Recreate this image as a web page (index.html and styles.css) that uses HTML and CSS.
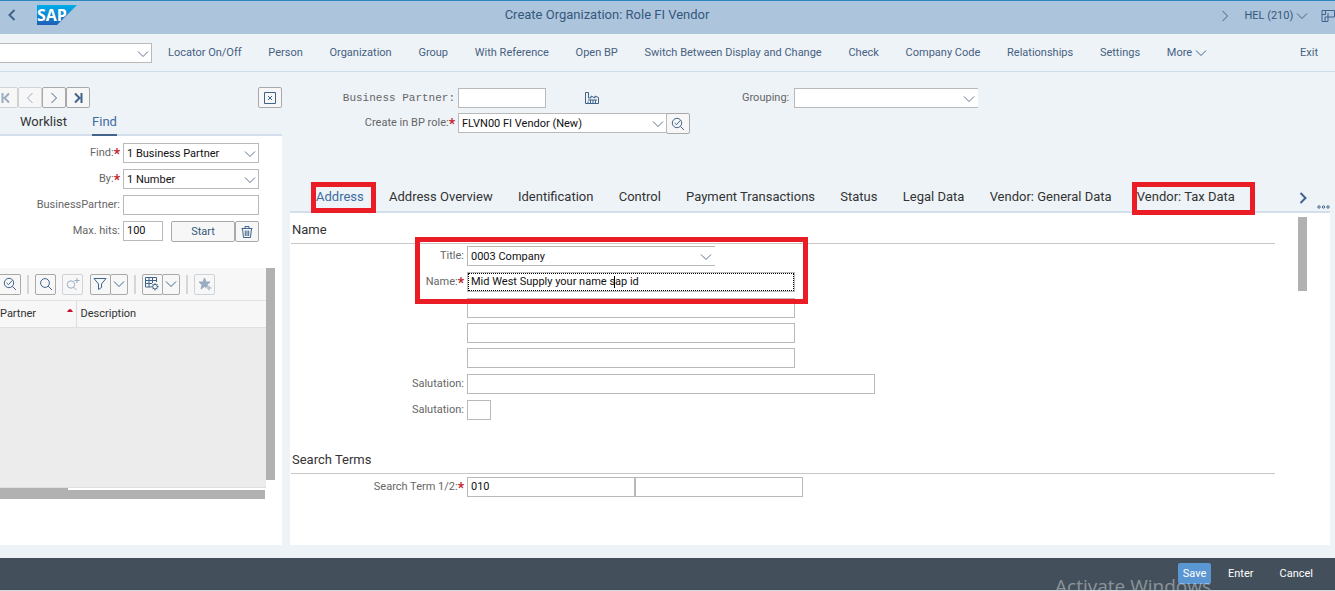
FILE: index.html
```html
<!DOCTYPE html>
<html lang="en">
<head>
<meta charset="utf-8">
<title>Create Organization: Role FI Vendor</title>
<link rel="stylesheet" href="styles.css">
</head>
<body>
<svg class="sprite" aria-hidden="true">
  <symbol id="down" viewBox="0 0 12 12"><path d="M1 3.5 6 8.5 11 3.5"/></symbol>
  <symbol id="right" viewBox="0 0 12 12"><path d="M3.5 1 8.5 6 3.5 11"/></symbol>
  <symbol id="left" viewBox="0 0 12 12"><path d="M8.5 1 3.5 6 8.5 11"/></symbol>
  <symbol id="first" viewBox="0 0 12 12"><path d="M2.5 1V11M9 1.500 4.500 6 9 10.500"/></symbol>
  <symbol id="last" viewBox="0 0 12 12"><path d="M9.500 1V11M3 1.500 7.500 6 3 10.500"/></symbol>
  <symbol id="search" viewBox="0 0 14 14"><circle cx="6" cy="6" r="4.400"/><path d="M9.200 9.200 13 13"/></symbol>
  <symbol id="search-check" viewBox="0 0 14 14"><circle cx="6" cy="6" r="4.700"/><path d="M9.400 9.400 13 13M3.700 6 5.500 7.700 9.300 3.400"/></symbol>
  <symbol id="search-plus" viewBox="0 0 14 14"><circle cx="5" cy="7.500" r="3.700"/><path d="M7.700 10.200 10.500 13M11 1V6M8.500 3.500H13.500"/></symbol>
  <symbol id="filter" viewBox="0 0 14 14"><path d="M1 1.500H13L8.500 7V10.500L5.500 12.500V7Z"/></symbol>
  <symbol id="table-gear" viewBox="0 0 14 14"><path d="M6.500 10H.5V.5H11.500V5M.5 3.500H11.500M.5 6.500H7M4 .5V10M7.500 .5V6"/><circle cx="10" cy="9.700" r="2.300"/><path d="M10 6V7.400M10 12V13.500M6.300 9.700H7.700M12.300 9.700H13.700M7.400 7.100 8.400 8.100M11.600 11.300 12.600 12.300M12.600 7.100 11.600 8.100M8.400 11.300 7.400 12.300"/></symbol>
  <symbol id="star-plus" viewBox="0 0 14 14"><path class="solid" d="M6.500 1 8 5H12L9 7.500 9.500 9.500H8V10.500L6.500 9.500 3 12 4 7.700 1 5H5Z"/><path d="M11 8.500V13.500M8.500 11H13.500"/></symbol>
  <symbol id="trash" viewBox="0 0 14 14"><path d="M1.500 3.500H12.500M5 3V1.500H9V3M2.500 3.500 3.500 12.500H10.500L11.500 3.500M5.300 5.500V11M7 5.500V11M8.700 5.500V11"/></symbol>
  <symbol id="close-box" viewBox="0 0 14 14"><path d="M1.500 1.500H12.500V12.500H1.500ZM5 5 9 9M9 5 5 9"/></symbol>
  <symbol id="factory" viewBox="0 0 14 12"><path d="M.5 .5V11.500H13.500V5.500L10 4V6L6 4V6H3.500V.5H.5M3 9.500V11.500M5.500 8V11M8 8V11M10.500 8V11M3 8H12"/></symbol>
  <symbol id="panel" viewBox="0 0 14 14"><path d="M1 1.500H13.500V8H7V12.500H1ZM4.500 1.500V5.500H1M7 4V8M4 12V8H7"/></symbol>
</svg>

<header class="shell">
  <div class="shell-left">
    <button aria-label="Back"><svg class="icon bold"><use href="#left"/></svg></button>
    <svg class="logo" viewBox="0 0 40 20" role="img" aria-label="SAP">
      <defs><linearGradient id="sap" x1="0" y1="0" x2="0" y2="1"><stop offset="0" stop-color="#00aeea"/><stop offset="1" stop-color="#1d5fb8"/></linearGradient></defs>
      <path fill="url(#sap)" d="M0 0H40L20 20H0Z"/>
      <text x="0" y="16">SAP</text>
    </svg>
  </div>
  <h1>Create Organization: Role FI Vendor</h1>
  <div class="shell-right">
    <button aria-label="Next"><svg class="icon"><use href="#right"/></svg></button>
    <button>HEL (210) <svg class="icon"><use href="#down"/></svg></button>
    <button aria-label="Panel"><svg class="icon large"><use href="#panel"/></svg></button>
  </div>
</header>

<nav class="menu">
  <span class="combo command"><select aria-label="Command"><option></option></select><svg class="icon"><use href="#down"/></svg></span>
  <div class="menu-items">
    <button>Locator On/Off</button><button>Person</button><button>Organization</button><button>Group</button><button>With Reference</button><button>Open BP</button><button>Switch Between Display and Change</button><button>Check</button><button>Company Code</button><button>Relationships</button><button>Settings</button><button>More <svg class="icon"><use href="#down"/></svg></button>
  </div>
  <button>Exit</button>
</nav>

<main class="work">
  <aside class="locator">
    <div class="locator-nav">
      <button class="btn cut nav dim" aria-label="First"><svg class="icon bold"><use href="#first"/></svg></button>
      <button class="btn nav dim" aria-label="Previous"><svg class="icon"><use href="#left"/></svg></button>
      <button class="btn nav" aria-label="Following"><svg class="icon"><use href="#right"/></svg></button>
      <button class="btn nav" aria-label="Last"><svg class="icon bold"><use href="#last"/></svg></button>
      <button class="btn nav close" aria-label="Close"><svg class="icon large"><use href="#close-box"/></svg></button>
    </div>
    <div class="locator-tabs"><button>Worklist</button><button class="current">Find</button></div>
    <div class="locator-body">
      <form class="find">
        <label class="required" for="find">Find:</label>
        <span class="combo"><select id="find"><option>1 Business Partner</option></select><svg class="icon"><use href="#down"/></svg></span>
        <label class="required" for="by">By:</label>
        <span class="combo"><select id="by"><option>1 Number</option></select><svg class="icon"><use href="#down"/></svg></span>
        <label for="partner">BusinessPartner:</label>
        <input id="partner">
        <label for="hits">Max. hits:</label>
        <div class="hits"><input id="hits" value="100"><button type="button" class="btn start">Start</button><button type="button" class="btn nav" aria-label="Delete"><svg class="icon large"><use href="#trash"/></svg></button></div>
      </form>
      <section class="results">
        <div class="results-main">
          <div class="results-tools">
            <button class="btn cut tool" aria-label="Details"><svg class="icon large"><use href="#search-check"/></svg></button>
            <i class="sep"></i>
            <button class="btn tool" aria-label="Search"><svg class="icon large"><use href="#search"/></svg></button>
            <button class="btn tool dim" aria-label="Search next"><svg class="icon large"><use href="#search-plus"/></svg></button>
            <span class="split"><button class="btn tool" aria-label="Filter"><svg class="icon large"><use href="#filter"/></svg></button><button class="btn arrow" aria-label="Filter options"><svg class="icon"><use href="#down"/></svg></button></span>
            <i class="sep"></i>
            <span class="split"><button class="btn tool" aria-label="Layout"><svg class="icon large"><use href="#table-gear"/></svg></button><button class="btn arrow" aria-label="Layout options"><svg class="icon"><use href="#down"/></svg></button></span>
            <i class="sep"></i>
            <button class="btn tool dim" aria-label="Add favorite"><svg class="icon large"><use href="#star-plus"/></svg></button>
          </div>
          <table><thead><tr><th class="col-partner"><span>Partner<svg class="sort" viewBox="0 0 6 3"><path d="M0 3Q3-3 6 3Z"/></svg></span></th><th>Description</th></tr></thead></table>
          <div class="results-empty"></div>
        </div>
        <div class="v-scroll"></div>
        <div class="h-thumb"></div>
        <div class="h-scroll"></div>
      </section>
    </div>
  </aside>

  <section class="detail">
    <form class="partner-head">
      <label class="mono" for="bp">Business Partner:</label>
      <div class="line">
        <input id="bp" class="bp">
        <svg class="icon large factory"><use href="#factory"/></svg>
        <label for="grouping">Grouping:</label>
        <span class="combo open grouping"><select id="grouping"><option></option></select><svg class="icon"><use href="#down"/></svg></span>
      </div>
      <label class="required" for="role">Create in BP role:</label>
      <div class="line">
        <span class="combo role"><select id="role"><option>FLVN00 FI Vendor (New)</option></select><svg class="icon"><use href="#down"/></svg></span><button type="button" class="btn nav" aria-label="Role details"><svg class="icon large"><use href="#search-check"/></svg></button>
      </div>
    </form>
    <div class="tabs">
      <div class="tab-items">
        <button class="current marked">Address</button><button>Address Overview</button><button>Identification</button><button>Control</button><button>Payment Transactions</button><button>Status</button><button>Legal Data</button><button>Vendor: General Data</button><button class="marked wide">Vendor: Tax Data</button>
      </div>
      <button class="next" aria-label="More tabs"><svg class="icon bold"><use href="#right"/></svg></button>
      <button class="dots" aria-label="All tabs"><svg viewBox="0 0 13 4"><circle cx="2" cy="2" r="1.200"/><circle cx="6.500" cy="2" r="1.200"/><circle cx="11" cy="2" r="1.200"/></svg></button>
    </div>
    <div class="sheet">
      <form class="sheet-form">
        <h2>Name</h2>
        <div class="fields">
          <div class="highlight">
            <label for="title">Title:</label>
            <span class="combo open title"><select id="title"><option>0003 Company</option></select><svg class="icon"><use href="#down"/></svg></span>
            <label class="required" for="name">Name:</label>
            <span class="name-box"><input id="name" value="Mid West Supply your name sap id"><i class="caret"></i></span>
          </div>
          <div class="name-lines"><input aria-label="Name 2"><input aria-label="Name 3"><input aria-label="Name 4"></div>
          <label for="sal">Salutation:</label><input id="sal" class="long">
          <label for="sal2">Salutation:</label><input id="sal2" class="tiny">
        </div>
        <h2>Search Terms</h2>
        <div class="fields terms">
          <label class="required" for="term">Search Term 1/2:</label>
          <div class="line"><input id="term" class="term" value="010"><input class="term" aria-label="Search term 2"></div>
        </div>
      </form>
      <div class="sheet-scroll"></div>
    </div>
  </section>
</main>

<footer class="actions">
  <button class="save">Save</button><button>Enter</button><button>Cancel</button>
  <span class="watermark">Activate Windows</span>
</footer>
</body>
</html>
```
FILE: styles.css
```css
*, *::after { box-sizing: border-box; }
body {
  margin: 0;
  min-height: 100vh;
  display: flex;
  flex-direction: column;
  overflow-x: hidden;
  background: #eef3f8;
  color: #333;
  font: 11px/20px Roboto, "Open Sans", sans-serif;
}
button, input, select { font: inherit; color: inherit; margin: 0; }
button { padding: 0; border: 0; background: none; white-space: nowrap; }
h1, h2 { margin: 0; font-weight: 400; }
.sprite { position: absolute; width: 0; height: 0; }
.icon { width: 12px; height: 12px; flex: none; fill: none; stroke: #3f638a; stroke-width: 1; vertical-align: middle; }
.icon.bold { stroke-width: 2; }
.icon.large { width: 14px; height: 14px; }
.solid { fill: #3f638a; }

.shell {
  display: grid;
  grid-template-columns: 505fr auto 626fr;
  align-items: center;
  height: 34px;
  border-top: 1px solid #2c88c0;
  background: #adc4dd;
  color: #34587c;
  overflow: hidden;
}
.shell h1 { font-size: 13px; padding-bottom: 6px; }
.shell-left, .shell-right { display: flex; align-items: center; padding-bottom: 6px; }
.shell-left { padding-left: 6px; gap: 19px; }
.shell-right { justify-content: flex-end; gap: 13px; padding-bottom: 3px; }
.logo { width: 40px; height: 20px; }
.logo text { font: 700 16px "Open Sans", sans-serif; fill: #fff; }

.menu {
  display: flex;
  align-items: center;
  height: 38px;
  padding-right: 17px;
  border-bottom: 1px solid #cfdde9;
  color: #46617f;
}
.command { width: 152px; margin-right: 16px; }
.menu .command select { border-left: 0; }
.menu-items { flex: 1; display: flex; justify-content: space-between; margin-right: 93px; }

input, select {
  width: 100%;
  height: 20px;
  padding: 0 3px;
  border: 1px solid #b9b9b9;
  border-radius: 0;
  background: #fff;
  color: #111;
  appearance: none;
}
.combo { position: relative; display: flex; }
.combo .icon { position: absolute; right: 3px; top: 5px; pointer-events: none; stroke: #60758d; }
.combo.open select { border-right: 0; }
label { height: 20px; color: #666; text-align: right; white-space: nowrap; }
.required::after { content: "*"; color: #c4262e; font: 700 14px/0 Roboto, sans-serif; vertical-align: -3px; }
.mono { font-family: "Liberation Mono", monospace; }
.line { display: flex; }

.btn {
  display: inline-flex;
  align-items: center;
  justify-content: center;
  height: 21px;
  border: 1px solid #a9a9a9;
  border-radius: 2px;
  background: #f7f7f7;
}
.btn.nav { width: 24px; }
.btn.tool { width: 21px; }
.btn.arrow { width: 18px; margin-left: -1px; }
.btn.cut { border-left: 0; border-radius: 0 2px 2px 0; }
.btn.nav.cut { width: 18px; justify-content: flex-start; }
.btn.dim { border-color: #d0d3d6; }
.btn.dim .icon { opacity: .5; }

.work { flex: 1; display: grid; grid-template-columns: 282px 1fr; gap: 8px; padding: 15px 5px 13px 0; }
.locator, .detail { display: flex; flex-direction: column; min-width: 0; }
.locator-nav { display: flex; }
.close { margin-left: auto; }
.locator-tabs {
  display: flex;
  gap: 25px;
  height: 28px;
  padding-left: 20px;
  border-bottom: 2px solid #d3e0ec;
  font-size: 13px;
}
.locator-tabs button { height: 28px; }
.locator-tabs .current { color: #3e6b9e; border-bottom: 2px solid #44658a; padding-top: 2px; }
.locator-body { flex: 1; background: #fff; padding-top: 7px; }
.find { display: grid; grid-template-columns: 120px 136px; gap: 6px 3px; }
.hits { display: flex; }
.hits input { width: 40px; margin-right: 8px; }
.start { flex: 1; color: #34587c; }

.results { display: grid; grid-template-columns: 1fr 9px; margin: 26px 7px 0 0; }
.results-tools {
  display: flex;
  align-items: center;
  justify-content: space-between;
  height: 33px;
  padding-right: 51px;
  border-bottom: 1px solid #e2e2e2;
  background: #f7f7f7;
}
.split { display: flex; }
.sep { width: 2px; height: 19px; background: #d6d6d6; }
.results table { width: 100%; border-collapse: collapse; background: #f7f7f7; line-height: 18px; }
.results th { height: 26px; padding: 0 4px; border-bottom: 1px solid #e0e0e0; font-weight: 400; text-align: left; }
.results .col-partner { width: 76px; padding: 0 3px 0 0; border-right: 1px solid #ddd; }
.col-partner span { display: flex; justify-content: space-between; }
.sort { width: 6px; height: 3px; margin-top: 4px; fill: #c4122f; }
.results-empty { height: 160px; background: #ececec; border-bottom: 1px solid #e0e0e0; }
.v-scroll { background: #b1b1b1; margin-bottom: 8px; }
.h-thumb { width: 68px; height: 2px; background: #b1b1b1; grid-column: 1; }
.h-scroll { height: 9px; margin-right: 1px; background: #b1b1b1; grid-column: 1; }

.partner-head { display: grid; grid-template-columns: 165px 1fr; gap: 5px 3px; padding-top: 1px; }
.bp { width: 88px; margin-right: 39px; }
.factory { margin: 3px 143px 0 0; }
.grouping { width: 184px; margin-left: 5px; }
.role { width: 209px; margin-right: -1px; }

.tabs {
  display: flex;
  align-items: center;
  height: 30px;
  margin-top: 49px;
  padding-left: 26px;
  border-bottom: 2px solid #d3e0ec;
  font-size: 13px;
}
.tab-items { flex: 1; display: flex; justify-content: space-between; }
.tabs .current { color: #3e6b9e; }
.marked { position: relative; }
.marked::after { content: ""; position: absolute; inset: -5px -12px -6px -5px; border: 5px solid #ea1c25; }
.marked.wide::after { inset: -5px -20px -8px -5px; }
.next { margin: 0 8px 0 62px; }
.dots { align-self: flex-end; height: 9px; line-height: 4px; }
.dots svg { display: block; width: 13px; height: 4px; fill: none; stroke: #3f638a; }

.sheet { flex: 1; display: flex; background: #fff; padding: 4px 23px 0 1px; }
.sheet-form { flex: 1; min-width: 0; margin-right: 23px; }
.sheet-scroll { width: 9px; height: 74px; background: #b1b1b1; }
.sheet h2 { height: 27px; line-height: 26px; border-bottom: 1px solid #c8c8c8; padding-left: 1px; font-size: 13px; }
.fields { display: grid; grid-template-columns: 173px 1fr; gap: 6px 3px; padding: 2px 0 27px; }
.fields.terms { padding: 3px 0 0; }
.highlight { grid-column: 1 / -1; display: grid; grid-template-columns: subgrid; gap: 6px 3px; position: relative; }
.highlight::after { content: ""; position: absolute; left: 124px; top: -9px; bottom: -12px; width: 393px; border: 5px solid #ea1c25; pointer-events: none; }
.title { width: 248px; }
.name-box { display: flex; position: relative; width: 328px; }
.name-box input { outline: 1px dotted #000; outline-offset: -2px; }
.caret { position: absolute; left: 147px; top: 4px; width: 1px; height: 12px; background: #000; }
.name-lines { grid-column: 2; display: grid; gap: 5px; width: 328px; }
.long { width: 408px; }
.tiny { width: 24px; }
.term { width: 168px; }

.actions {
  position: relative;
  display: flex;
  justify-content: flex-end;
  align-items: flex-start;
  gap: 17px;
  height: 33px;
  padding: 5px 22px 0 0;
  border-bottom: 1px solid #d5d8dc;
  background: #434f5b;
  color: #fff;
  overflow: hidden;
}
.actions button { height: 21px; }
.actions .save { width: 33px; border-radius: 2px; background: #5a97d2; }
.actions button:last-of-type { margin-left: 9px; }
.watermark { position: absolute; right: 124px; top: 15px; font: 19px/26px "Open Sans", sans-serif; color: rgba(255, 255, 255, .4); pointer-events: none; }
```
